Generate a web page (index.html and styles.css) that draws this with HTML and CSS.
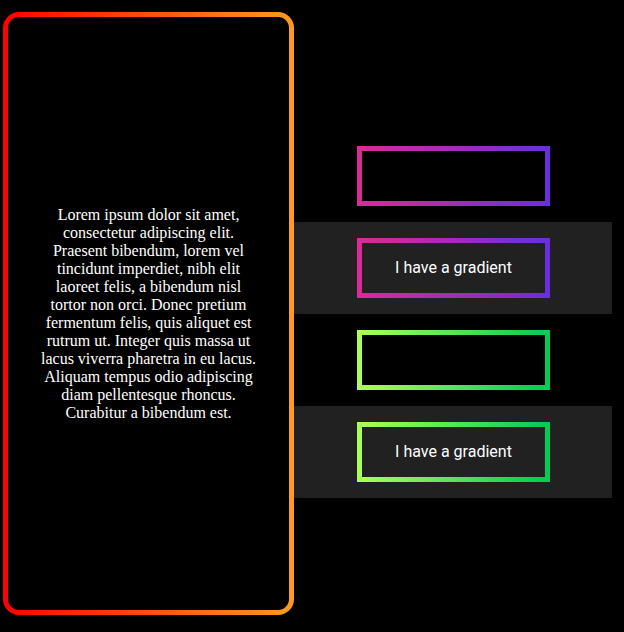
FILE: index.html
```html
<!DOCTYPE html>
<html lang="en">
<head>
  <meta charset="UTF-8">
  <meta name="viewport" content="width=device-width, initial-scale=1.0">
  <title>Gradient borders</title>
  <link rel="stylesheet" href="styles.css">
</head>
<body>
  <div class="layout">
    <!-- rounded card -->
    <div class="card">
      <p>Lorem ipsum dolor sit amet, consectetur adipiscing elit. Praesent bibendum, lorem vel tincidunt imperdiet, nibh elit laoreet felis, a bibendum nisl tortor non orci. Donec pretium fermentum felis, quis aliquet est rutrum ut. Integer quis massa ut lacus viverra pharetra in eu lacus. Aliquam tempus odio adipiscing diam pellentesque rhoncus. Curabitur a bibendum est.</p>
    </div>

    <!-- gradient boxes -->
    <div class="rows">
      <div class="row"><div class="box purple"></div></div>
      <div class="row stripe"><div class="box purple">I have a gradient</div></div>
      <div class="row"><div class="box green"></div></div>
      <div class="row stripe"><div class="box green">I have a gradient</div></div>
    </div>
  </div>
</body>
</html>
```

FILE: styles.css
```css
body {
  margin: 0;
  padding: 0;
  background-color: #000;
  height: 100vh;
  overflow: hidden;
}
.layout {
  display: flex;
  align-items: center;
  padding: 12px 0 0 3px;
}
.card {
  width: 291px;
  height: 603px;
  box-sizing: border-box;
  border: 5px solid transparent;
  border-radius: 16px;
  background:
    linear-gradient(#000, #000) padding-box,
    linear-gradient(to right, #ff0000, #ff9c1e) border-box;
  display: flex;
  align-items: center;
  justify-content: center;
  padding: 0 31px;
}
.card p {
  margin: 0;
  color: #fff;
  font-family: 'Liberation Serif', 'Times New Roman', serif;
  font-size: 16px;
  line-height: 18px;
  text-align: center;
}
.rows {
  width: 318px;
  display: flex;
  flex-direction: column;
}
.row {
  height: 92px;
  display: flex;
  align-items: center;
  justify-content: center;
  padding-left: 1px;
}
.row.stripe {
  background-color: #212121;
}
.box {
  width: 193px;
  height: 60px;
  box-sizing: border-box;
  border: 5px solid;
  display: flex;
  align-items: center;
  justify-content: center;
  color: #fff;
  font-family: Roboto, 'Liberation Sans', sans-serif;
  font-size: 16px;
}
.box.purple {
  border-image: linear-gradient(to right, #dc2a96, #6b2edc) 1;
}
.box.green {
  border-image: linear-gradient(to right, #aaff55, #02cb57) 1;
}
```
